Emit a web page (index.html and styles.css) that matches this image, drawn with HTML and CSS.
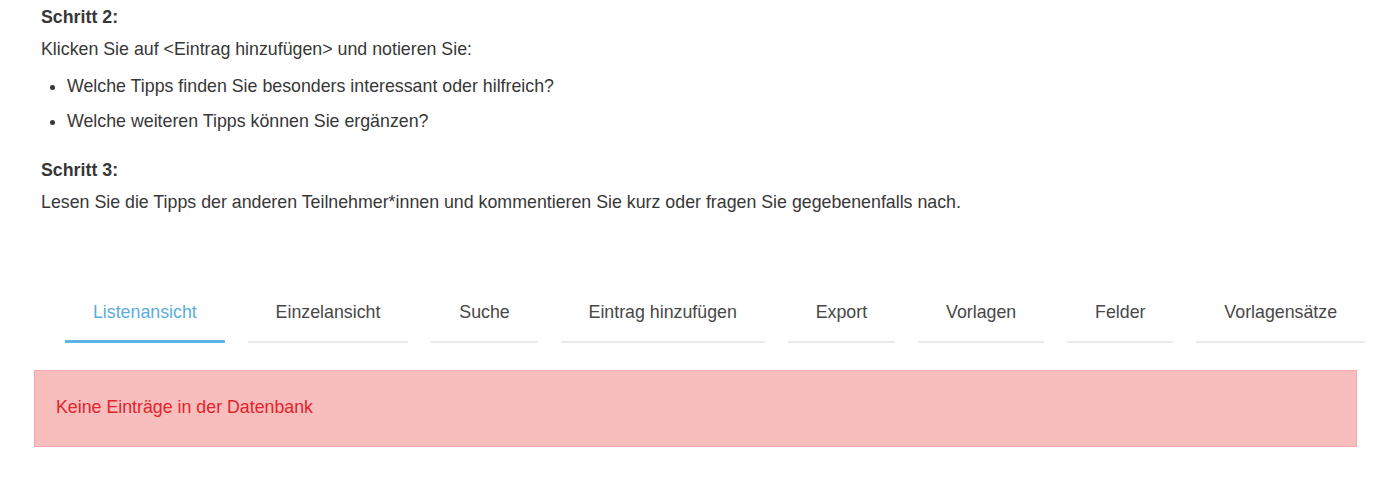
FILE: index.html
```html
<!DOCTYPE html>
<html lang="de">
<head>
    <meta charset="UTF-8">
    <meta name="viewport" content="width=device-width, initial-scale=1.0">
    <title>Datenbank - Tipps</title>
    <link rel="stylesheet" href="styles.css">
</head>
<body>
    <div class="page">
        <div class="intro">
            <p class="step-title">Schritt 2:</p>
            <p class="step-text">Klicken Sie auf &lt;Eintrag hinzufügen&gt; und notieren Sie:</p>
            <ul class="questions">
                <li>Welche Tipps finden Sie besonders interessant oder hilfreich?</li>
                <li>Welche weiteren Tipps können Sie ergänzen?</li>
            </ul>
            <p class="step-title step-gap">Schritt 3:</p>
            <p class="step-text">Lesen Sie die Tipps der anderen Teilnehmer*innen und kommentieren Sie kurz oder fragen Sie gegebenenfalls nach.</p>
        </div>

        <nav class="tabs">
            <a href="#" class="tab active">Listenansicht</a>
            <a href="#" class="tab">Einzelansicht</a>
            <a href="#" class="tab">Suche</a>
            <a href="#" class="tab">Eintrag hinzufügen</a>
            <a href="#" class="tab">Export</a>
            <a href="#" class="tab">Vorlagen</a>
            <a href="#" class="tab">Felder</a>
            <a href="#" class="tab">Vorlagensätze</a>
        </nav>

        <div class="alert">Keine Einträge in der Datenbank</div>
    </div>
</body>
</html>
```

FILE: styles.css
```css
body {
    font-family: "Liberation Sans", Arial, sans-serif;
    font-size: 17.8px;
    line-height: 24px;
    color: #373737;
    background-color: #fff;
    margin: 0;
}
.page {
    padding: 5px 30px 0 34px;
}
.intro {
    padding-left: 7px;
}
p {
    margin: 0;
}
.step-title {
    font-weight: bold;
}
.step-text {
    margin-top: 8px;
}
.step-gap {
    margin-top: 25px;
}
.questions {
    margin: 13px 0 0;
    padding-left: 26px;
}
.questions li {
    margin-bottom: 11px;
}
.questions li:last-child {
    margin-bottom: 0;
}
.tabs {
    display: flex;
    align-items: flex-end;
    gap: 23px;
    width: 1300px;
    margin: 86px 0 0 31px;
}
.tab {
    flex: 1 1 auto;
    text-align: center;
    padding: 0 26px 17px;
    color: #474747;
    text-decoration: none;
    border-bottom: 2px solid #e9e9e9;
}
.tab.active {
    color: #5aade0;
    border-bottom: 3px solid #5ab4e5;
    padding-bottom: 16px;
}
.alert {
    margin-top: 27px;
    padding: 24px 21px 27px;
    background-color: #f8bdbd;
    border: 1px solid #f5a6ae;
    color: #e3242b;
}
```
